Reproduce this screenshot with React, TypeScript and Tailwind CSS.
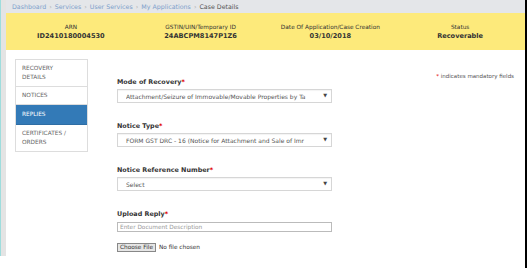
const font = { fontFamily: '"DejaVu Sans", Verdana, sans-serif' };

const crumbs = ['Dashboard', 'Services', 'User Services', 'My Applications'];

const navItems = [
  { label: 'RECOVERY DETAILS', active: false },
  { label: 'NOTICES', active: false },
  { label: 'REPLIES', active: true },
  { label: 'CERTIFICATES / ORDERS', active: false },
];

function Label({ text }: { text: string }) {
  return (
    <div className="text-[6.4px] leading-[9px] font-bold text-[#333]">
      {text}
      <span className="text-[#e10000]">*</span>
    </div>
  );
}

function Select({ value }: { value: string }) {
  return (
    <div className="mt-[2px] h-[14px] border border-[#d6d6d6] shadow-[inset_0_1px_1px_rgba(0,0,0,0.05)] flex items-center pl-[8px] pr-[4px] text-[6px] text-[#555]">
      <span className="flex-1 whitespace-nowrap overflow-hidden">{value}</span>
      <span className="text-[5px] text-[#444] ml-[6px]">▼</span>
    </div>
  );
}

export default function App() {
  return (
    <div className="w-[527px] h-[268px] bg-white flex overflow-hidden" style={font}>
      <div className="flex h-[256px]">
        <div className="w-[1px] bg-[#9edddd]" />
        <div className="w-[5px] bg-[#e4e4e4]" />
      </div>

      <div className="flex-1 flex flex-col">
        {/* Breadcrumb */}
        <div className="h-[13px] bg-[#e4e6e9] flex items-center pl-[6px] text-[6.3px] text-[#7d9fcb] whitespace-nowrap">
          {crumbs.map((c) => (
            <span key={c}>
              {c}
              <span className="text-[#aaa] mx-[3px]">›</span>
            </span>
          ))}
          <span className="text-[#555]">Case Details</span>
        </div>

        {/* Case header */}
        <div className="h-[37px] bg-[#fdea7b] grid grid-cols-4 items-center text-center text-[#333]">
          <div>
            <div className="text-[5.8px] leading-[9px]">ARN</div>
            <div className="text-[6.6px] leading-[9px] font-bold">ID2410180004530</div>
          </div>
          <div>
            <div className="text-[5.8px] leading-[9px]">GSTIN/UIN/Temporary ID</div>
            <div className="text-[6.6px] leading-[9px] font-bold">24ABCPM8147P1Z6</div>
          </div>
          <div>
            <div className="text-[5.8px] leading-[9px]">Date Of Application/Case Creation</div>
            <div className="text-[6.6px] leading-[9px] font-bold">03/10/2018</div>
          </div>
          <div>
            <div className="text-[5.8px] leading-[9px]">Status</div>
            <div className="text-[6.6px] leading-[9px] font-bold">Recoverable</div>
          </div>
        </div>

        {/* Body */}
        <div className="flex flex-1">
          <div className="ml-[9px] mt-[9px] w-[73px] self-start border border-b-0 border-[#ddd]">
            {navItems.map((item) => (
              <div
                key={item.label}
                className={
                  item.active
                    ? 'pl-[6px] pr-[16px] py-[5px] leading-[9px] text-[5.8px] bg-[#337ab7] text-white border-b border-[#2e6da4]'
                    : 'pl-[6px] pr-[16px] py-[4px] leading-[9px] text-[5.8px] text-[#666] border-b border-[#ddd]'
                }
              >
                {item.label}
              </div>
            ))}
          </div>

          <div className="ml-[29px] w-[215px] pt-[28px]">
            <Label text="Mode of Recovery" />
            <Select value="Attachment/Seizure of Immovable/Movable Properties by Ta" />

            <div className="mt-[19px]">
              <Label text="Notice Type" />
              <Select value="FORM GST DRC - 16 (Notice for Attachment and Sale of Imr" />
            </div>

            <div className="mt-[19px]">
              <Label text="Notice Reference Number" />
              <Select value="Select" />
            </div>

            <div className="mt-[19px]">
              <Label text="Upload Reply" />
              <div className="mt-[3px] h-[10px] border border-[#bbb] flex items-center pl-[2px] text-[5.8px] text-[#999]">
                Enter Document Description
              </div>
              <div className="mt-[11px] flex items-center text-[5.8px] text-[#333]">
                <span className="h-[9px] px-[2px] border border-[#888] bg-[#e6e6e6] flex items-center">Choose File</span>
                <span className="ml-[3px]">No file chosen</span>
              </div>
            </div>
          </div>

          <div className="ml-auto mr-[11px] mt-[22px] text-[5.5px] text-[#555] whitespace-nowrap self-start">
            <span className="text-[#e10000]">*</span> indicates mandatory fields
          </div>
        </div>
      </div>

      <div className="w-[2px] bg-black" />
    </div>
  );
}
